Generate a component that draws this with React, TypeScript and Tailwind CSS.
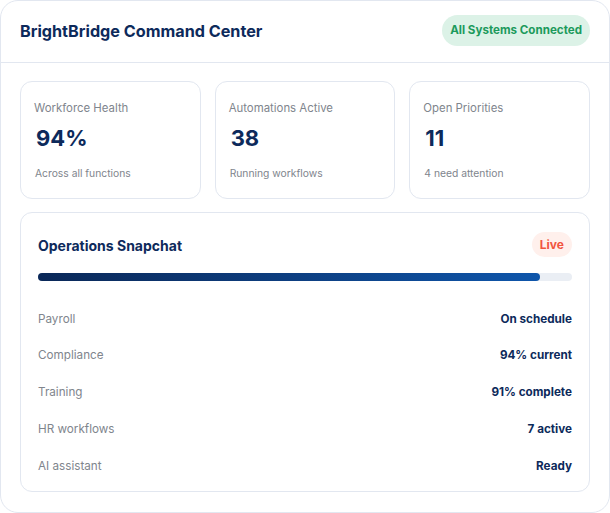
import React from 'react';

const stats = [
  { label: 'Workforce Health', value: '94%', sub: 'Across all functions' },
  { label: 'Automations Active', value: '38', sub: 'Running workflows' },
  { label: 'Open Priorities', value: '11', sub: '4 need attention' },
];

const rows = [
  { label: 'Payroll', value: 'On schedule' },
  { label: 'Compliance', value: '94% current' },
  { label: 'Training', value: '91% complete' },
  { label: 'HR workflows', value: '7 active' },
  { label: 'AI assistant', value: 'Ready' },
];

export default function App() {
  return (
    <div className="w-[610px] bg-white font-['Inter',sans-serif]">
      <div className="rounded-[18px] border border-[#e2e7f0] bg-white">
        {/* Header */}
        <div className="flex items-center justify-between border-b border-[#e2e7f0] px-[19px] pt-[14px] pb-[16px]">
          <h1 className="text-[16.2px] leading-[24px] font-bold text-[#0d2a5b]">BrightBridge Command Center</h1>
          <span className="rounded-full bg-[#dcf2e7] px-[8px] py-[7px] text-[11.6px] leading-[17px] font-bold text-[#1c9a5c]">
            All Systems Connected
          </span>
        </div>

        <div className="px-[19px] pt-[18px] pb-[20px]">
          {/* Stat cards */}
          <div className="grid grid-cols-3 gap-[14px]">
            {stats.map((s) => (
              <div key={s.label} className="rounded-[12px] border border-[#e2e7f0] px-[13px] pt-[17px] pb-[17px]">
                <div className="text-[11.4px] leading-[18px] text-[#80858d]">{s.label}</div>
                <div className="mt-[6px] pl-[2px] text-[22px] leading-[30px] font-bold text-[#0d2a5b]">{s.value}</div>
                <div className="mt-[12px] pl-[1px] text-[10.3px] leading-[16px] text-[#80858d]">{s.sub}</div>
              </div>
            ))}
          </div>

          {/* Operations */}
          <div className="mt-[13px] rounded-[12px] border border-[#e2e7f0] px-[17px] pt-[19px] pb-[6px]">
            <div className="flex items-center justify-between">
              <h2 className="pt-[3px] text-[14px] leading-[20px] font-bold text-[#0d2a5b]">Operations Snapchat</h2>
              <span className="rounded-full bg-[#fff0ec] px-[8px] py-[4px] text-[12px] leading-[17px] font-bold text-[#f1553f]">
                Live
              </span>
            </div>
            <div className="mt-[16px] h-[8px] w-full rounded-full bg-[#eaeef4]">
              <div className="h-full rounded-full bg-gradient-to-r from-[#0a2858] to-[#0e56ab]" style={{ width: '94%' }} />
            </div>
            <div className="mt-[20px] flex flex-col">
              {rows.map((r) => (
                <div key={r.label} className="flex h-[36.75px] items-center justify-between">
                  <span className="text-[11.7px] text-[#80858d]">{r.label}</span>
                  <span className="text-[11.7px] font-bold text-[#0d2a5b]">{r.value}</span>
                </div>
              ))}
            </div>
          </div>
        </div>
      </div>
    </div>
  );
}
